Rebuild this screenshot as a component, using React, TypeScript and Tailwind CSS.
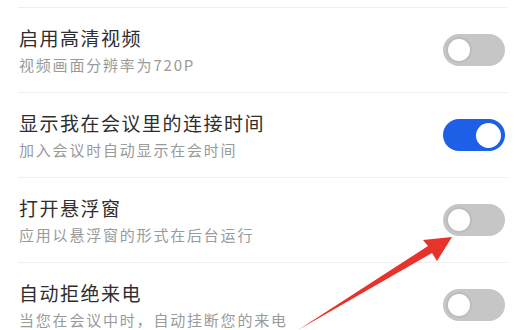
import React from "react";

interface Item {
  title: string;
  desc: string;
  on: boolean;
}

const items: Item[] = [
  { title: "启用高清视频", desc: "视频画面分辨率为720P", on: false },
  { title: "显示我在会议里的连接时间", desc: "加入会议时自动显示在会时间", on: true },
  { title: "打开悬浮窗", desc: "应用以悬浮窗的形式在后台运行", on: false },
  { title: "自动拒绝来电", desc: "当您在会议中时，自动挂断您的来电", on: false },
];

const Toggle: React.FC<{ on: boolean }> = ({ on }) => (
  <div
    className={
      on
        ? "w-[62px] h-[32px] rounded-full bg-[#1d5fe6] flex items-center justify-end px-[4px] shrink-0"
        : "w-[62px] h-[32px] rounded-full bg-[#c6c6c6] flex items-center justify-start px-[3px] shrink-0"
    }
  >
    <div
      className={
        on
          ? "w-[25px] h-[25px] rounded-full bg-white"
          : "w-[26px] h-[26px] rounded-full bg-white border-[2px] border-[#bdbdbd]"
      }
    />
  </div>
);

const App: React.FC = () => {
  return (
    <div
      className="relative w-[515px] h-[330px] overflow-hidden bg-white pt-[7px] pl-[18px] pr-[7px]"
      style={{ fontFamily: '"Noto Sans CJK SC", "Noto Sans", sans-serif' }}
    >
      {items.map((it) => (
        <div
          key={it.title}
          className="h-[85px] border-t border-[#efefef] flex items-center justify-between pr-[3px] shrink-0"
        >
          <div className="flex flex-col pl-[1px]">
            <span className="text-[19px] leading-[26px] tracking-[1.5px] text-[#2e2e2e]">
              {it.title}
            </span>
            <span className="mt-[4px] text-[15px] leading-[20px] tracking-[1.8px] text-[#9a9a9a]">
              {it.desc}
            </span>
          </div>
          <Toggle on={it.on} />
        </div>
      ))}

      <svg
        className="absolute left-0 top-0 pointer-events-none"
        width="515"
        height="330"
        viewBox="0 0 515 330"
      >
        <polygon
          points="298,330 428,246 423,240 452,237 437,261 432,253"
          fill="#e8322c"
        />
      </svg>
    </div>
  );
};

export default App;
